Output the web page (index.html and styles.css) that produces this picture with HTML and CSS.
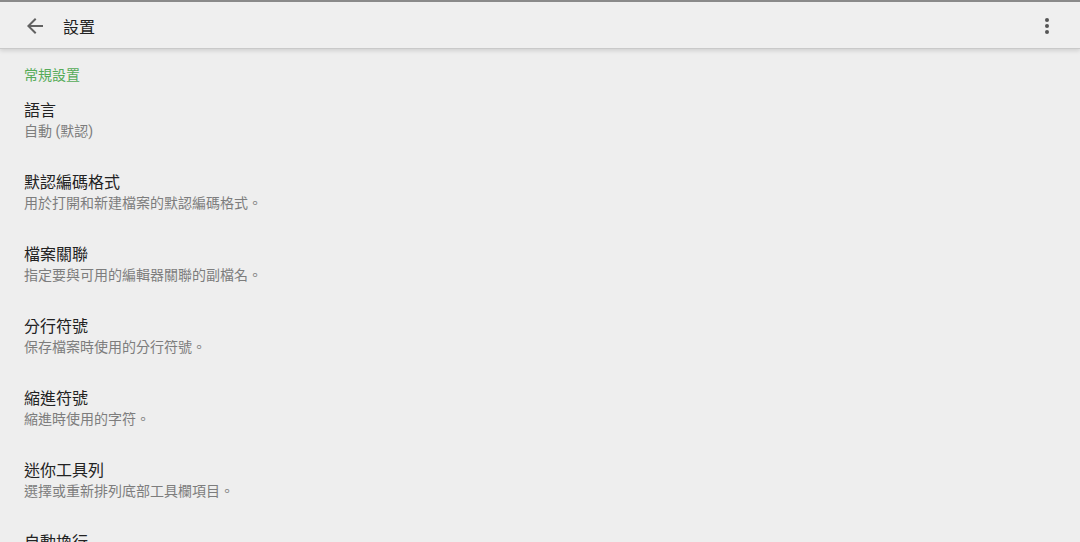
FILE: index.html
```html
<!DOCTYPE html>
<html lang="zh-Hant">
<head>
    <meta charset="UTF-8">
    <meta name="viewport" content="width=device-width, initial-scale=1.0">
    <title>設置</title>
    <link rel="stylesheet" href="styles.css">
</head>
<body>
    <div class="toolbar">
        <div class="toolbar-left">
            <svg class="icon back" viewBox="0 0 24 24" width="24" height="24">
                <path d="M20 11H7.83l5.59-5.59L12 4l-8 8 8 8 1.41-1.41L7.83 13H20v-2z"/>
            </svg>
            <h1>設置</h1>
        </div>
        <svg class="icon menu" viewBox="0 0 24 24" width="24" height="24">
            <circle cx="12" cy="6" r="2"/>
            <circle cx="12" cy="12" r="2"/>
            <circle cx="12" cy="18" r="2"/>
        </svg>
    </div>

    <div class="content">
        <div class="section-title">常規設置</div>

        <div class="pref">
            <div class="pref-title">語言</div>
            <div class="pref-summary">自動 (默認)</div>
        </div>
        <div class="pref">
            <div class="pref-title">默認編碼格式</div>
            <div class="pref-summary">用於打開和新建檔案的默認編碼格式。</div>
        </div>
        <div class="pref">
            <div class="pref-title">檔案關聯</div>
            <div class="pref-summary">指定要與可用的編輯器關聯的副檔名。</div>
        </div>
        <div class="pref">
            <div class="pref-title">分行符號</div>
            <div class="pref-summary">保存檔案時使用的分行符號。</div>
        </div>
        <div class="pref">
            <div class="pref-title">縮進符號</div>
            <div class="pref-summary">縮進時使用的字符。</div>
        </div>
        <div class="pref">
            <div class="pref-title">迷你工具列</div>
            <div class="pref-summary">選擇或重新排列底部工具欄項目。</div>
        </div>
        <div class="pref">
            <div class="pref-title">自動換行</div>
            <div class="pref-summary">在視窗邊緣自動換行。</div>
        </div>
    </div>
</body>
</html>
```

FILE: styles.css
```css
* {
    margin: 0;
    padding: 0;
    box-sizing: border-box;
    font-family: Roboto, 'Noto Sans CJK TC', sans-serif;
}

html, body {
    height: 100%;
    overflow: hidden;
}

body {
    background-color: #eeeeee;
    border-top: 2px solid #8a8a8a;
}

.toolbar {
    height: 47px;
    display: flex;
    align-items: center;
    justify-content: space-between;
    padding: 0 21px 0 23px;
    background-color: #efefef;
    border-bottom: 1px solid #c9c9c9;
    box-shadow: 0 2px 4px rgba(0, 0, 0, 0.12);
    position: relative;
}

.toolbar-left {
    display: flex;
    align-items: center;
}

.icon {
    fill: #616161;
}

.back {
    margin-top: 2px;
}

.toolbar h1 {
    font-size: 16px;
    font-weight: 400;
    color: #222;
    margin-left: 16px;
    margin-top: 1px;
}

.menu {
    fill: #555;
    margin-top: 1px;
}

.content {
    padding: 16px 24px 0;
}

.section-title {
    font-size: 14px;
    line-height: 20px;
    color: #55ab58;
}

.pref {
    height: 72px;
    display: flex;
    flex-direction: column;
    justify-content: center;
}

.pref-title {
    font-size: 16px;
    line-height: 20px;
    color: #222;
}

.pref-summary {
    font-size: 14px;
    line-height: 20px;
    color: #7d7d7d;
}
```
